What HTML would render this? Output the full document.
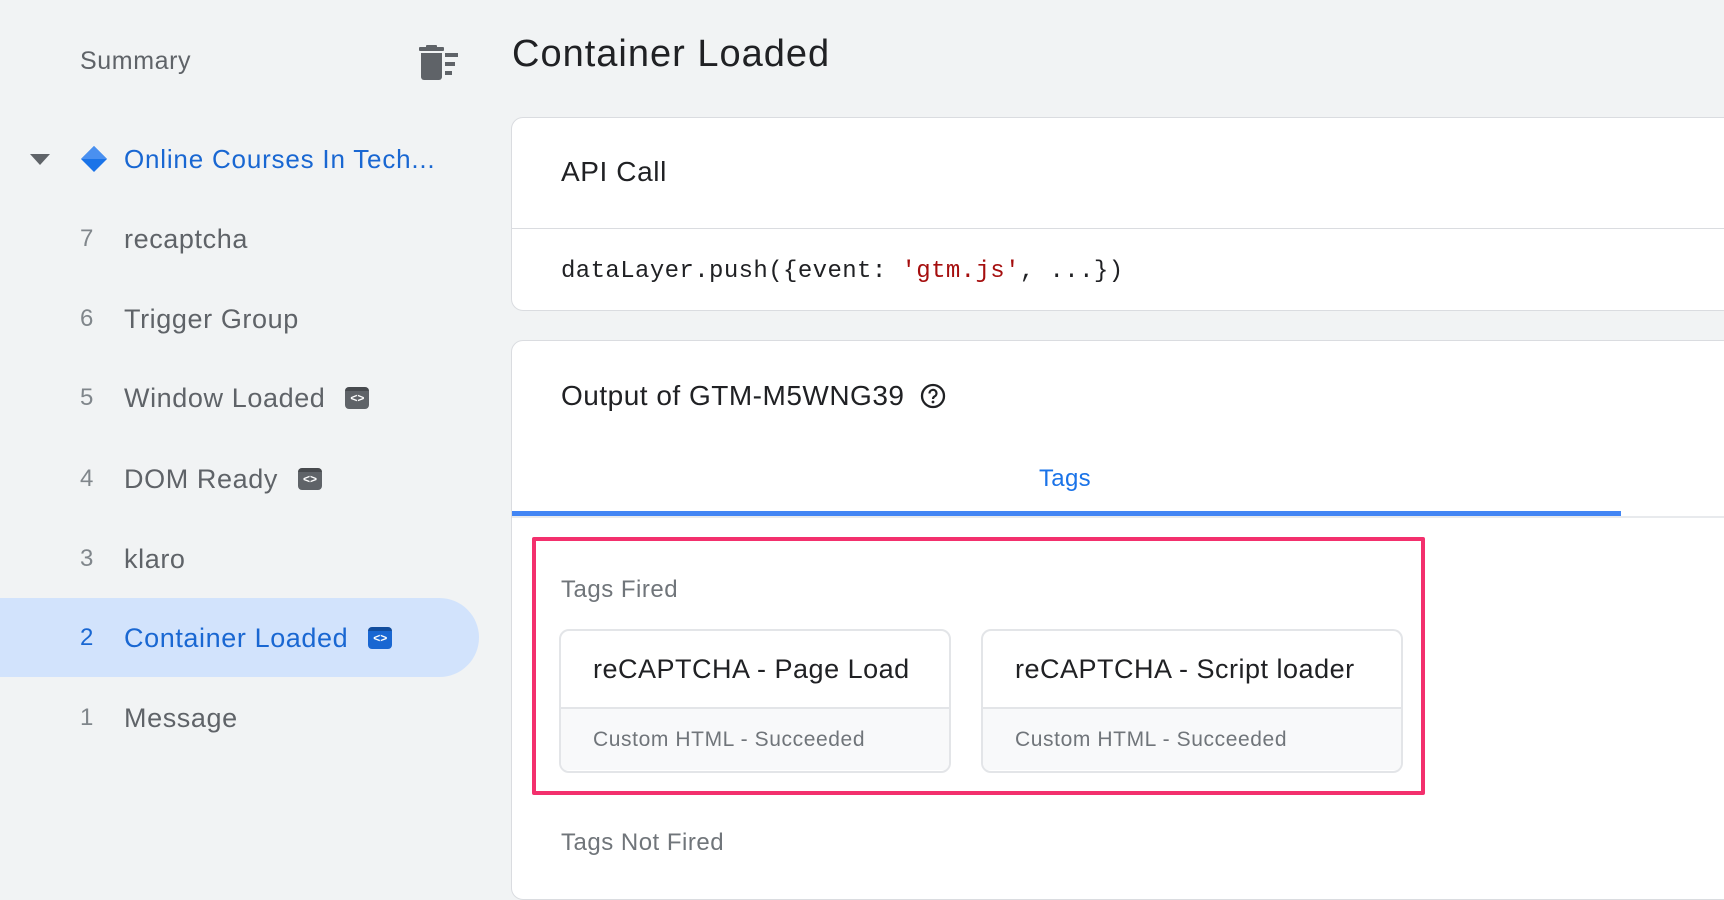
<!DOCTYPE html>
<html><head><meta charset="utf-8"><style>
*{box-sizing:border-box;margin:0;padding:0}
body{width:1724px;height:846px;overflow:hidden;background:#f1f3f4;font-family:"Liberation Sans",sans-serif;position:relative;color:#202124}
.abs{position:absolute}
.sum{left:80px;top:47px;font-size:25px;color:#5f6368;letter-spacing:0.6px}
.item{position:absolute;left:0;width:479px;height:46px;display:flex;align-items:center;font-size:27px;color:#5f6368;letter-spacing:0.6px}
.item .n{position:absolute;left:80px;color:#80868b;font-size:24px}
.item .t{position:absolute;left:124px;display:flex;align-items:center}
.badge{display:inline-block;width:24px;height:22px;border-radius:4px;background:#5f6368;color:#fff;font-size:12px;line-height:22px;text-align:center;margin-left:20px;font-weight:bold;position:relative;letter-spacing:0}
.badge:before{content:"";position:absolute;left:0;right:0;top:0;height:4px;background:rgba(0,0,0,.25);border-radius:4px 4px 0 0}
.card{position:absolute;background:#fff;border:1px solid #dadce0;border-radius:12px}
.tag{position:absolute;border:2px solid #e3e5e8;border-radius:10px;overflow:hidden;background:#fff}
.tag .h{height:78px;display:flex;align-items:center;padding-left:32px;font-size:27px;letter-spacing:0.5px;color:#202124;border-bottom:2px solid #e3e5e8}
.tag .f{height:61px;background:#f8f9fa;display:flex;align-items:center;padding-left:32px;font-size:21px;letter-spacing:0.6px;color:#70757a}
</style></head><body>
<div class="abs sum">Summary</div>
<svg class="abs" style="left:418px;top:45px" width="44" height="36" viewBox="0 0 44 36"><rect x="1" y="2" width="25" height="4" rx="1" fill="#5f6368"/><rect x="8" y="0" width="11" height="4" rx="1" fill="#5f6368"/><path d="M3 8h21v24a3 3 0 0 1-3 3H6a3 3 0 0 1-3-3z" fill="#5f6368"/><rect x="27" y="8" width="13" height="4" fill="#5f6368"/><rect x="27" y="17" width="10" height="4" fill="#5f6368"/><rect x="27" y="26" width="7" height="4" fill="#5f6368"/></svg>

<div class="abs" style="left:0;top:598px;width:479px;height:79px;background:#d2e3fc;border-radius:0 40px 40px 0"></div>

<svg class="abs" style="left:30px;top:154px" width="20" height="12"><path d="M0 0h20L10 11z" fill="#5f6368"/></svg>
<svg class="abs" style="left:80px;top:145px" width="28" height="28"><path d="M14 1L27 14 14 27 1 14z" fill="#1a73e8"/><path d="M14 1L27 14H1z" fill="#4a90f0"/></svg>
<div class="abs" style="left:124px;top:144px;font-size:26px;color:#1967d2;line-height:30px;letter-spacing:0.8px">Online Courses In Tech...</div>

<div class="item" style="top:216px"><span class="n">7</span><span class="t">recaptcha</span></div>
<div class="item" style="top:296px"><span class="n">6</span><span class="t">Trigger Group</span></div>
<div class="item" style="top:375px"><span class="n">5</span><span class="t">Window Loaded<span class="badge">&lt;&gt;</span></span></div>
<div class="item" style="top:456px"><span class="n">4</span><span class="t">DOM Ready<span class="badge">&lt;&gt;</span></span></div>
<div class="item" style="top:536px"><span class="n">3</span><span class="t">klaro</span></div>
<div class="item" style="top:615px;color:#1967d2"><span class="n" style="color:#1967d2">2</span><span class="t">Container Loaded<span class="badge" style="background:#1967d2">&lt;&gt;</span></span></div>
<div class="item" style="top:695px"><span class="n">1</span><span class="t">Message</span></div>

<div class="abs" style="left:512px;top:33px;font-size:38px;letter-spacing:1px;color:#202124">Container Loaded</div>

<div class="card" style="left:511px;top:117px;width:1240px;height:194px">
 <div class="abs" style="left:49px;top:38px;font-size:28px;letter-spacing:0.6px">API Call</div>
 <div class="abs" style="left:0;right:0;top:110px;border-top:1px solid #dadce0"></div>
 <div class="abs" style="left:49px;top:140px;font-family:'Liberation Mono',monospace;font-size:24px;letter-spacing:0.4px">dataLayer.push({event: <span style="color:#a50e0e">'gtm.js'</span>, ...})</div>
</div>

<div class="card" style="left:511px;top:340px;width:1240px;height:560px">
 <div class="abs" style="left:49px;top:39px;font-size:28px;letter-spacing:0.5px;display:flex;align-items:center">Output of GTM-M5WNG39
  <svg style="margin-left:16px" width="26" height="26" viewBox="0 0 26 26"><circle cx="13" cy="13" r="11" fill="none" stroke="#202124" stroke-width="2.3"/><path d="M9.5 10.5a3.5 3.5 0 1 1 5 3c-1.2.7-1.5 1.3-1.5 2.5" fill="none" stroke="#202124" stroke-width="2.2"/><circle cx="13" cy="19" r="1.4" fill="#202124"/></svg></div>
 <div class="abs" style="left:527px;top:124px;font-size:24px;color:#1a73e8;letter-spacing:0.3px">Tags</div>
 <div class="abs" style="left:0;right:0;top:175px;border-top:2px solid #e8eaed"></div>
 <div class="abs" style="left:0;width:1109px;top:170px;height:5px;background:#4285f4"></div>
 <div class="abs" style="left:20px;top:196px;width:893px;height:258px;border:4px solid #f3306d;border-radius:2px"></div>
 <div class="abs" style="left:49px;top:235px;font-size:24px;letter-spacing:0.5px;color:#70757a">Tags Fired</div>
 <div class="tag" style="left:47px;top:288px;width:392px;height:144px"><div class="h">reCAPTCHA - Page Load</div><div class="f">Custom HTML - Succeeded</div></div>
 <div class="tag" style="left:469px;top:288px;width:422px;height:144px"><div class="h">reCAPTCHA - Script loader</div><div class="f">Custom HTML - Succeeded</div></div>
 <div class="abs" style="left:49px;top:488px;font-size:24px;letter-spacing:0.5px;color:#70757a">Tags Not Fired</div>
</div>
</body></html>
